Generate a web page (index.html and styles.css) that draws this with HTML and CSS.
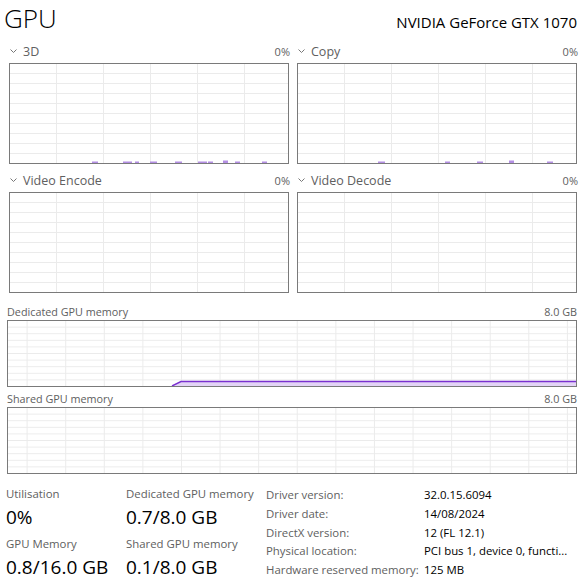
FILE: index.html
```html
<!DOCTYPE html>
<html lang="en">
<head>
<meta charset="utf-8">
<title>GPU</title>
<link rel="stylesheet" href="styles.css">
</head>
<body>
<div class="page">
  <header class="head">
    <h1 class="title">GPU</h1>
    <div class="model">NVIDIA GeForce GTX 1070</div>
  </header>

  <section class="charts">
    <div class="chart">
      <div class="chart-label">
        <span class="name"><svg class="chev" width="7" height="4" viewBox="0 0 7 4"><path d="M0.5 0.5 L3.5 3.5 L6.5 0.5" fill="none" stroke="#777" stroke-width="1"/></svg>3D</span>
        <span class="pct">0%</span>
      </div>
      <div class="graph eng">
        <svg class="data" width="278" height="99" viewBox="0 0 278 99">
          <g fill="#b48fe4">
            <rect x="82" y="97.5" width="6" height="1.5"/>
            <rect x="113" y="97.5" width="9" height="1.5"/>
            <rect x="125" y="97.5" width="4" height="1.5"/>
            <rect x="140" y="97.5" width="7" height="1.5"/>
            <rect x="165" y="97.5" width="7" height="1.5"/>
            <rect x="188" y="97.5" width="9" height="1.5"/>
            <rect x="198" y="97.5" width="5" height="1.5"/>
            <rect x="213" y="96.5" width="5" height="2.5"/>
            <rect x="225" y="97.5" width="5" height="1.5"/>
            <rect x="252" y="97.5" width="5" height="1.5"/>
          </g>
        </svg>
      </div>
    </div>
    <div class="chart">
      <div class="chart-label">
        <span class="name"><svg class="chev" width="7" height="4" viewBox="0 0 7 4"><path d="M0.5 0.5 L3.5 3.5 L6.5 0.5" fill="none" stroke="#777" stroke-width="1"/></svg>Copy</span>
        <span class="pct">0%</span>
      </div>
      <div class="graph eng">
        <svg class="data" width="278" height="99" viewBox="0 0 278 99">
          <g fill="#b48fe4">
            <rect x="80" y="97.5" width="7" height="1.5"/>
            <rect x="147" y="97.5" width="5" height="1.5"/>
            <rect x="179" y="97.5" width="6" height="1.5"/>
            <rect x="211" y="96.5" width="5" height="2.5"/>
            <rect x="249" y="97.5" width="6" height="1.5"/>
          </g>
        </svg>
      </div>
    </div>
    <div class="chart">
      <div class="chart-label">
        <span class="name"><svg class="chev" width="7" height="4" viewBox="0 0 7 4"><path d="M0.5 0.5 L3.5 3.5 L6.5 0.5" fill="none" stroke="#777" stroke-width="1"/></svg>Video Encode</span>
        <span class="pct">0%</span>
      </div>
      <div class="graph eng"></div>
    </div>
    <div class="chart">
      <div class="chart-label">
        <span class="name"><svg class="chev" width="7" height="4" viewBox="0 0 7 4"><path d="M0.5 0.5 L3.5 3.5 L6.5 0.5" fill="none" stroke="#777" stroke-width="1"/></svg>Video Decode</span>
        <span class="pct">0%</span>
      </div>
      <div class="graph eng"></div>
    </div>
  </section>

  <section class="mem">
    <div class="mem-label first"><span>Dedicated GPU memory</span><span>8.0 GB</span></div>
    <div class="graph memgraph">
      <svg class="data" width="568" height="65" viewBox="0 0 568 65">
        <polygon points="164,65 173,60.5 568,60.5 568,65" fill="#e3d4f6"/>
        <polyline points="164,65 173,60.5 568,60.5" fill="none" stroke="#7a30d0" stroke-width="1.4"/>
      </svg>
    </div>
    <div class="mem-label"><span>Shared GPU memory</span><span>8.0 GB</span></div>
    <div class="graph memgraph"></div>
  </section>

  <section class="stats">
    <div class="stat-col">
      <div class="stat"><div class="stat-label">Utilisation</div><div class="stat-value">0%</div></div>
      <div class="stat"><div class="stat-label">GPU Memory</div><div class="stat-value">0.8/16.0 GB</div></div>
    </div>
    <div class="stat-col">
      <div class="stat"><div class="stat-label">Dedicated GPU memory</div><div class="stat-value">0.7/8.0 GB</div></div>
      <div class="stat"><div class="stat-label">Shared GPU memory</div><div class="stat-value">0.1/8.0 GB</div></div>
    </div>
    <dl class="details">
      <dt>Driver version:</dt><dd>32.0.15.6094</dd>
      <dt>Driver date:</dt><dd>14/08/2024</dd>
      <dt>DirectX version:</dt><dd>12 (FL 12.1)</dd>
      <dt>Physical location:</dt><dd>PCI bus 1, device 0, functi...</dd>
      <dt>Hardware reserved memory:</dt><dd>125 MB</dd>
    </dl>
  </section>
</div>
</body>
</html>
```

FILE: styles.css
```css
* {
  box-sizing: border-box;
  margin: 0;
  padding: 0;
}

body {
  margin: 0;
  background: #ffffff;
  color: #000000;
  font-family: "Open Sans", "Noto Sans", sans-serif;
  width: 584px;
  height: 585px;
  overflow: hidden;
}

.head {
  display: flex;
  justify-content: space-between;
  align-items: baseline;
  height: 35px;
  padding: 0 7px 0 4px;
}

.title {
  font-size: 26px;
  font-weight: 300;
  line-height: 36px;
}

.model {
  font-size: 15px;
  line-height: 20px;
}

.charts {
  display: grid;
  grid-template-columns: 280px 280px;
  column-gap: 8px;
  padding-left: 9px;
}

.chart-label {
  display: flex;
  justify-content: space-between;
  align-items: center;
  width: 281px;
  height: 18px;
  margin: 7px 0 3px;
  color: #606060;
}

.name {
  display: flex;
  align-items: center;
  gap: 6px;
  padding-left: 1px;
  font-size: 12.5px;
}

.chev {
  display: block;
}

.pct {
  font-size: 11px;
}

.graph {
  position: relative;
  border: 1px solid #7a7a7a;
}

.data {
  position: absolute;
  left: 0;
  top: 0;
  display: block;
}

.eng {
  height: 101px;
  background-image:
    linear-gradient(to right, transparent 46px, #ebebeb 46px),
    linear-gradient(to bottom, transparent 9px, #ebebeb 9px);
  background-size: 47px 100%, 100% 10px;
}

.mem {
  padding: 0 7px;
}

.mem-label {
  display: flex;
  justify-content: space-between;
  align-items: center;
  height: 18px;
  margin-top: 2px;
  font-size: 10.8px;
  color: #606060;
}

.mem-label.first {
  margin-top: 9px;
}

.memgraph {
  height: 67px;
  background-image:
    linear-gradient(to right, transparent 37.6px, #ebebeb 37.6px),
    linear-gradient(to bottom, transparent 5.6px, #ebebeb 5.6px);
  background-size: 38.6px 100%, 100% 6.6px;
  background-position: -19px 0, 0 0;
}

.stats {
  display: grid;
  grid-template-columns: 120px 140px 1fr;
  padding: 12px 0 0 6px;
}

.stat-col {
  display: flex;
  flex-direction: column;
  gap: 6px;
}

.stat-label {
  font-size: 11.4px;
  line-height: 16px;
  color: #606060;
  white-space: nowrap;
}

.stat-value {
  font-size: 19px;
  line-height: 26px;
  margin-top: 2px;
  white-space: nowrap;
}

.details {
  display: grid;
  grid-template-columns: 158px 1fr;
  font-size: 11.4px;
  line-height: 18px;
}

.details dt {
  color: #606060;
  white-space: nowrap;
}

.details dd {
  color: #000000;
  white-space: nowrap;
}
```
